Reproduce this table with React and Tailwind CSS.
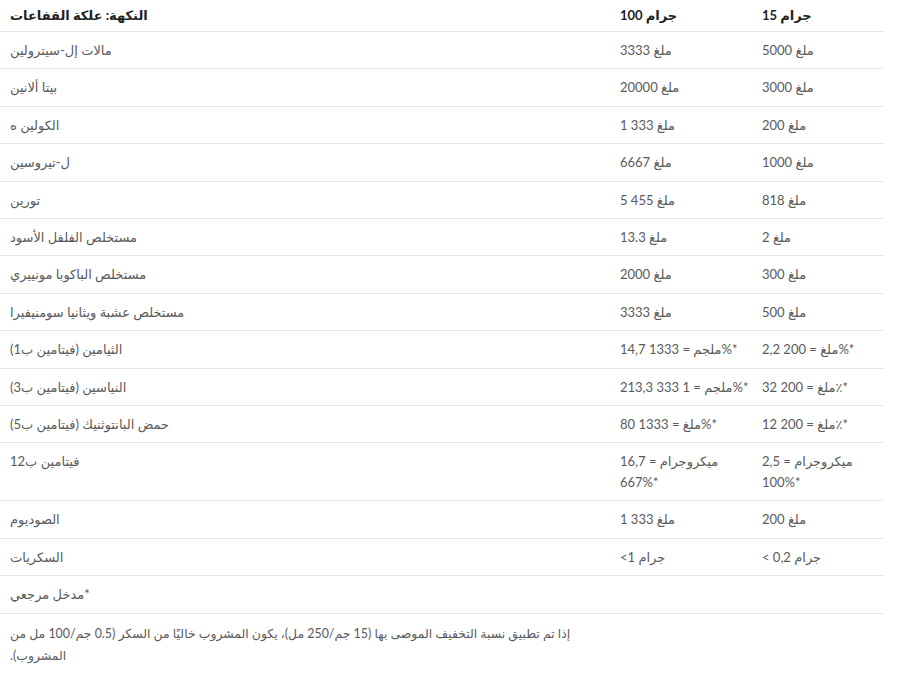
const ROWS = [
  ['مالات إل-سيترولين', '3333 ملغ', '5000 ملغ'],
  ['بيتا ألانين', '20000 ملغ', '3000 ملغ'],
  ['الكولين ه', '1 333 ملغ', '200 ملغ'],
  ['ل-تيروسين', '6667 ملغ', '1000 ملغ'],
  ['تورين', '5 455 ملغ', '818 ملغ'],
  ['مستخلص الفلفل الأسود', '13.3 ملغ', '2 ملغ'],
  ['مستخلص الباكوبا مونييري', '2000 ملغ', '300 ملغ'],
  ['مستخلص عشبة ويثانيا سومنيفيرا', '3333 ملغ', '500 ملغ'],
  ['الثيامين (فيتامين ب1)', '14,7 ملجم = 1333%*', '2,2 ملغ = 200%*'],
  ['النياسين (فيتامين ب3)', '213,3 ملجم = 1 333%*', '32 ملغ = 200٪*'],
  ['حمض البانتوثنيك (فيتامين ب5)', '80 ملغ = 1333%*', '12 ملغ = 200٪*'],
  ['فيتامين ب12', ['16,7 = ميكروجرام', '667%*'], ['2,5 = ميكروجرام', '100%*']],
  ['الصوديوم', '1 333 ملغ', '200 ملغ'],
  ['السكريات', '<1 جرام', '< 0,2 جرام'],
]

function Cell({ value, className }) {
  return (
    <td className={className}>
      {Array.isArray(value)
        ? <><div>{value[0]}</div><div>{value[1]}</div></>
        : value}
    </td>
  )
}

export default function App() {
  return (
    <div
      className="w-[900px] h-[675px] bg-white overflow-hidden text-[13px] text-[#5a5a5a]"
      style={{ fontFamily: '"Lato", "DejaVu Sans", sans-serif' }}
    >
      <table className="w-[883px] border-collapse table-fixed">
        <colgroup>
          <col className="w-[610px]" />
          <col className="w-[142px]" />
          <col className="w-[131px]" />
        </colgroup>
        <thead>
          <tr className="border-b border-[#e3e3e3]">
            <th className="text-left font-bold text-[#222] pl-[10px] pt-[5px] pb-[6px] leading-5">النكهة: علكة القفاعات</th>
            <th className="text-left font-bold text-[#222] pl-[10px] pt-[5px] pb-[6px] leading-5">100 جرام</th>
            <th className="text-left font-bold text-[#222] pl-[10px] pt-[5px] pb-[6px] leading-5">15 جرام</th>
          </tr>
        </thead>
        <tbody>
          {ROWS.map(([name, a, b]) => (
            <tr key={name} className="border-b border-[#e3e3e3] align-top">
              <td className="pl-[10px] py-2 leading-[20.4px]">{name}</td>
              <Cell value={a} className="pl-[10px] py-2 leading-[20.4px]" />
              <Cell value={b} className="pl-[10px] py-2 leading-[20.4px]" />
            </tr>
          ))}
          <tr className="border-b border-[#e3e3e3]">
            <td colSpan={3} className="pl-[10px] py-2 leading-[20.4px]">مدخل مرجعي*</td>
          </tr>
        </tbody>
      </table>
      {/* footnote keeps the source's line break */}
      <div dir="rtl" className="text-left text-[12.4px] pl-[10px] pt-[9px] leading-[22px] whitespace-nowrap">
        <p>إذا تم تطبيق نسبة التخفيف الموصى بها (15 جم/250 مل)، يكون المشروب خاليًا من السكر (0.5 جم/100 مل من</p>
        <p>المشروب).</p>
      </div>
    </div>
  )
}
